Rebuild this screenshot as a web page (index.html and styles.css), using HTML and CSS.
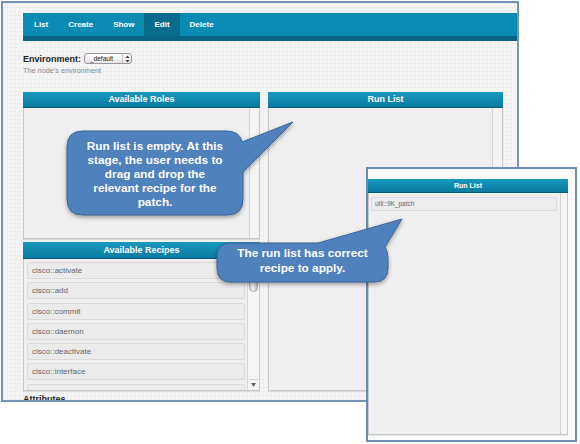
FILE: index.html
```html
<!DOCTYPE html>
<html>
<head>
<meta charset="utf-8">
<link rel="stylesheet" href="styles.css">
</head>
<body>
<div class="frame">
  <nav class="nav">
    <span class="nav-item">List</span>
    <span class="nav-item">Create</span>
    <span class="nav-item">Show</span>
    <span class="nav-item active">Edit</span>
    <span class="nav-item">Delete</span>
  </nav>
  <div class="env">
    <span class="env-label">Environment:</span>
    <span class="select"><span class="select-text">_default</span><span class="select-arrows"><svg width="5" height="8" viewBox="0 0 5 8"><path d="M2.5 0.5 L4.5 3 H0.5 Z M2.5 7.5 L4.5 5 H0.5 Z" fill="#444"/></svg></span></span>
  </div>
  <div class="hint">The node's environment</div>
  <div class="panels">
    <section class="panel roles">
      <header class="panel-head">Available Roles</header>
      <div class="panel-body"><div class="pane"></div><div class="gutter"></div></div>
    </section>
    <section class="panel runlist">
      <header class="panel-head">Run List</header>
      <div class="panel-body"><div class="pane"></div><div class="gutter"></div></div>
    </section>
    <section class="panel recipes">
      <header class="panel-head tall">Available Recipes</header>
      <div class="panel-body">
        <div class="pane items">
          <div class="item">cisco::activate</div>
          <div class="item">cisco::add</div>
          <div class="item">cisco::commit</div>
          <div class="item">cisco::daemon</div>
          <div class="item">cisco::deactivate</div>
          <div class="item">cisco::interface</div>
          <div class="item">cisco::install</div>
        </div>
        <div class="scrollbar">
          <div class="thumb"></div>
          <div class="arrow"><svg width="5" height="4" viewBox="0 0 5 4"><path d="M0 0 H5 L2.5 4 Z" fill="#666"/></svg></div>
        </div>
      </div>
    </section>
  </div>
  <h3 class="attributes">Attributes</h3>
</div>

<div class="window">
  <section class="panel mini">
    <header class="panel-head small">Run List</header>
    <div class="panel-body">
      <div class="pane items">
        <div class="item small">util::9K_patch</div>
      </div>
      <div class="gutter"></div>
    </div>
  </section>
</div>

<div class="callout c1">
  <svg class="callout-shape" width="240" height="110" viewBox="0 0 240 110">
    <path d="M23 16 H166 Q180 16 182 27 L233 7 L183 57 V84 Q183 100 167 100 H23 Q7 100 7 84 V32 Q7 16 23 16 Z" fill="#4f81bd" stroke="#3a6798" stroke-width="1"/>
  </svg>
  <div class="callout-text t1">Run list is empty. At this<br>stage, the user needs to<br>drag and drop the<br>relevant recipe for the<br>patch.</div>
</div>

<div class="callout c2">
  <svg class="callout-shape" width="210" height="95" viewBox="0 0 210 95">
    <path d="M26 43 H113 L197 19 L180 47 Q183 52 183 58 V68 Q183 82 169 82 H26 Q12 82 12 68 V57 Q12 43 26 43 Z" fill="#4f81bd" stroke="#3a6798" stroke-width="1"/>
  </svg>
  <div class="callout-text t2">The run list has correct<br>recipe to apply.</div>
</div>
</body>
</html>
```

FILE: styles.css
```css
* { box-sizing: border-box; }
html, body {
  margin: 0;
  padding: 0;
  background: #ffffff;
  font-family: "Liberation Sans", Arial, Helvetica, sans-serif;
  width: 580px;
  height: 444px;
  overflow: hidden;
}
.frame {
  margin: 1px 0 0 1px;
  width: 518px;
  height: 401px;
  border: 2px solid #7393b9;
  background-color: #f5f5f5;
  background-image:
    linear-gradient(rgba(0,0,0,0.018) 1px, transparent 1px),
    linear-gradient(90deg, rgba(0,0,0,0.018) 1px, transparent 1px);
  background-size: 4px 4px;
  padding: 10px 0 0 20px;
  overflow: hidden;
}
.nav {
  display: flex;
  height: 28px;
  padding-left: 1px;
  background: #0b8ab3;
  border-bottom: 5px solid #0a6585;
}
.nav-item {
  padding: 0 10px;
  line-height: 23px;
  height: 23px;
  color: #ffffff;
  font-size: 8px;
  font-weight: bold;
}
.nav-item.active { background: #0a6c8d; }
.env {
  display: flex;
  align-items: center;
  margin-top: 12px;
  height: 11px;
}
.env-label {
  font-size: 9px;
  font-weight: bold;
  color: #222;
  margin-right: 3px;
}
.select {
  display: flex;
  width: 48px;
  height: 11px;
  border: 1px solid #9a9a9a;
  border-radius: 3px;
  background: linear-gradient(#ffffff, #e6e6e6);
}
.select-text {
  flex: 1;
  font-size: 6.5px;
  line-height: 9px;
  color: #222;
  padding-left: 5px;
}
.select-arrows {
  width: 9px;
  border-left: 1px solid #c4c4c4;
  display: flex;
  align-items: center;
  justify-content: center;
}
.hint {
  margin-top: 2px;
  font-size: 7.3px;
  color: #8a8a8a;
  line-height: 9px;
}
.panels {
  margin-top: 17px;
  display: grid;
  grid-template-columns: 237px 235px;
  grid-template-rows: 147px 149px;
  column-gap: 8px;
  row-gap: 3px;
}
.panel {
  display: flex;
  flex-direction: column;
  box-shadow: 0 1px 1px rgba(0,0,0,0.08);
}
.runlist { grid-column: 2; grid-row: 1 / span 2; }
.roles { grid-column: 1; grid-row: 1; }
.recipes { grid-column: 1; grid-row: 2; }
.panel-head {
  height: 16px;
  line-height: 15px;
  text-align: center;
  color: #ffffff;
  font-size: 9px;
  font-weight: bold;
  background: linear-gradient(#1898bf, #0a7aa0);
  border-bottom: 1px solid #0a5d7a;
  flex: none;
}
.panel-head.tall { height: 17px; line-height: 16px; }
.panel-body {
  flex: 1;
  display: flex;
  background: #efefef;
  border: 1px solid #c8c8c8;
  border-top: none;
  min-height: 0;
  overflow: hidden;
}
.pane { flex: 1; }
.gutter {
  width: 10px;
  border-left: 1px solid #d2d2d2;
  background: #f4f4f4;
}
.items {
  display: flex;
  flex-direction: column;
  gap: 3.3px;
  padding: 3px 2px 0 3px;
  overflow: hidden;
}
.item {
  flex: none;
  height: 17px;
  border: 1px solid #d9d9d9;
  border-radius: 2px;
  background: #ebebeb;
  font-size: 8px;
  line-height: 15px;
  color: #666;
  padding-left: 4px;
}
.scrollbar {
  width: 12px;
  border-left: 1px solid #d6d6d6;
  background: #f6f6f6;
  display: flex;
  flex-direction: column;
  justify-content: space-between;
  padding: 2px 1px 0 1px;
}
.thumb {
  height: 31px;
  border-radius: 5px;
  background: linear-gradient(90deg, #d8d8d8, #f4f4f4 45%, #bdbdbd);
  border: 1px solid #a9a9a9;
}
.arrow {
  height: 11px;
  border-top: 1px solid #cfcfcf;
  display: flex;
  align-items: center;
  justify-content: center;
}
.attributes {
  margin: 3px 0 0 0;
  font-size: 9px;
  font-weight: bold;
  color: #222;
  line-height: 11px;
}
.window {
  position: absolute;
  left: 366px;
  top: 167px;
  width: 211px;
  height: 275px;
  border: 2px solid #6b8cb3;
  background: #fbfbfb;
  padding: 10px 7px 5px 0;
  display: flex;
}
.panel.mini { flex: 1; }
.panel-head.small {
  height: 14px;
  line-height: 13px;
  font-size: 7px;
}
.mini .items { padding: 4px 3px 0 2px; }
.mini .gutter { width: 7px; }
.item.small {
  height: 14px;
  font-size: 6.5px;
  line-height: 12px;
  padding-left: 3px;
  background: #ececec;
}
.callout {
  position: absolute;
}
.c1 { left: 60px; top: 115px; width: 240px; height: 110px; }
.c2 { left: 205px; top: 200px; width: 210px; height: 95px; }
.callout-shape {
  position: absolute;
  left: 0;
  top: 0;
  filter: drop-shadow(0 2px 2px rgba(0,0,0,0.35));
}
.callout-text {
  position: absolute;
  color: #ffffff;
  font-weight: bold;
  font-size: 11.8px;
  text-align: center;
  white-space: nowrap;
}
.t1 { left: 7px; top: 24px; width: 176px; line-height: 14px; }
.t2 { left: 12px; top: 46px; width: 171px; line-height: 15px; }
```
